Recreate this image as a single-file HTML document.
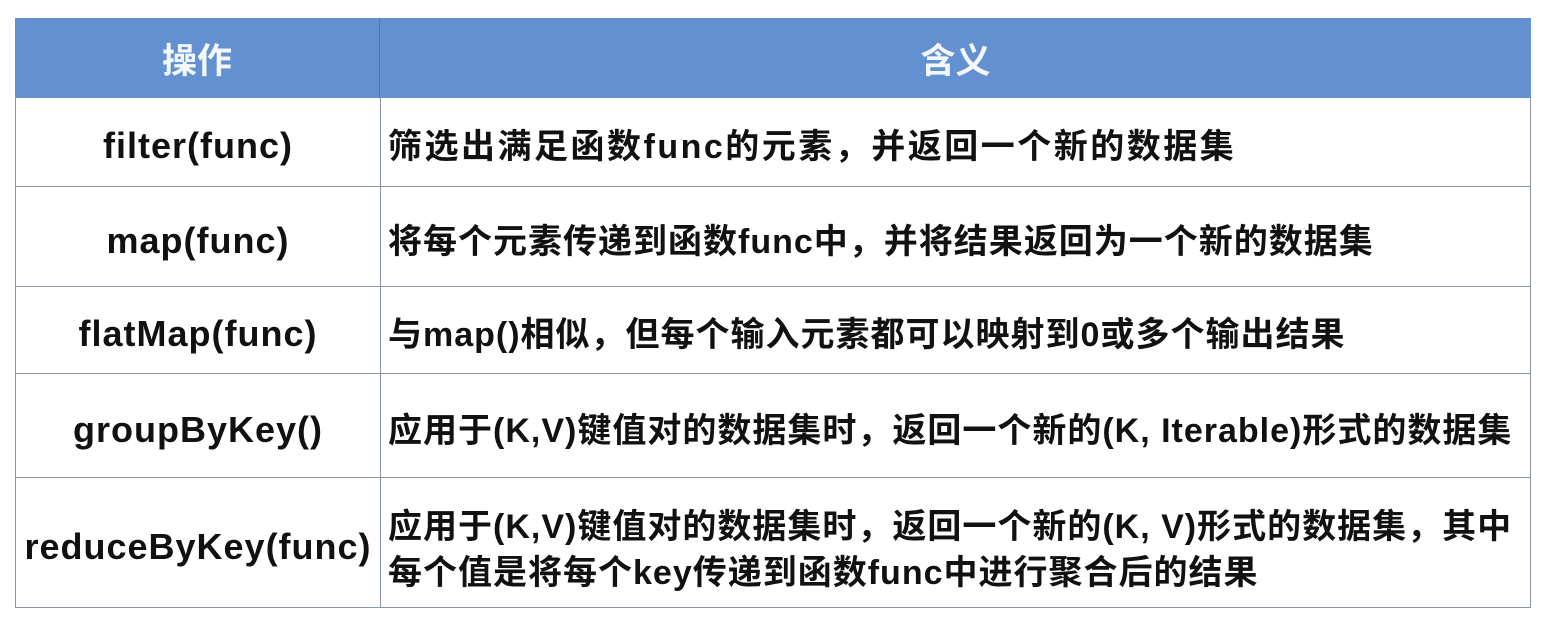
<!DOCTYPE html>
<html><head><meta charset="utf-8"><style>
body{margin:0;width:1552px;height:630px;background:#fff;position:relative;overflow:hidden;font-family:"Liberation Sans","Noto Sans CJK SC",sans-serif;font-weight:bold;color:#111}
.c{position:absolute;box-sizing:border-box;display:flex;align-items:center}
.h{background:#6290d0;color:#f4f7fc;justify-content:center;font-size:35px}
.l{justify-content:center;font-size:36px;letter-spacing:1px;padding-top:8px;border-left:1px solid #8a96a8;border-bottom:1px solid #8a96a8}
.r{padding-left:7px;padding-top:10px;font-size:34px;line-height:46px;border-left:1px solid #8a96a8;border-right:1px solid #8a96a8;border-bottom:1px solid #8a96a8;letter-spacing:1px;white-space:nowrap}
</style></head><body>
<div class="c h" style="left:15px;top:18px;width:365px;height:80px;border-right:1px solid #4d78b8">操作</div>
<div class="c h" style="left:380px;top:18px;width:1151px;height:80px">含义</div>

<div class="c l" style="left:15px;top:98px;width:365px;height:89px">filter(func)</div>
<div class="c r" style="left:380px;top:98px;width:1151px;height:89px;letter-spacing:2.5px">筛选出满足函数func的元素，并返回一个新的数据集</div>

<div class="c l" style="left:15px;top:187px;width:365px;height:100px">map(func)</div>
<div class="c r" style="left:380px;top:187px;width:1151px;height:100px">将每个元素传递到函数func中，并将结果返回为一个新的数据集</div>

<div class="c l" style="left:15px;top:287px;width:365px;height:87px">flatMap(func)</div>
<div class="c r" style="left:380px;top:287px;width:1151px;height:87px">与map()相似，但每个输入元素都可以映射到0或多个输出结果</div>

<div class="c l" style="left:15px;top:374px;width:365px;height:104px">groupByKey()</div>
<div class="c r" style="left:380px;top:374px;width:1151px;height:104px">应用于(K,V)键值对的数据集时，返回一个新的(K, Iterable)形式的数据集</div>

<div class="c l" style="left:15px;top:478px;width:365px;height:130px">reduceByKey(func)</div>
<div class="c r" style="left:380px;top:478px;width:1151px;height:130px;padding-top:14px"><div>应用于(K,V)键值对的数据集时，返回一个新的(K, V)形式的数据集，其中<br>每个值是将每个key传递到函数func中进行聚合后的结果</div></div>
</body></html>
